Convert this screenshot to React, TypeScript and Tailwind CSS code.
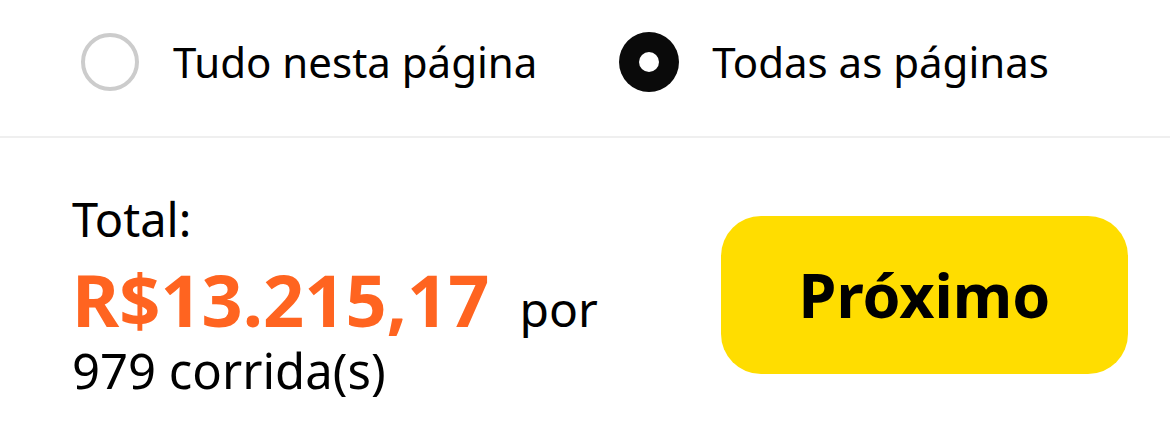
export default function App() {
  return (
    <div className="w-[1170px] h-[439px] bg-white font-['Noto_Sans',sans-serif] text-black">
      <div className="flex items-center h-[138px] pb-[12px] pl-[81px] border-b-2 border-[#efefef]">
        <div className="flex items-center gap-[34px]">
          <div className="w-[58px] h-[58px] rounded-full border-[4px] border-[#cccccc]" />
          <span className="text-[42px] leading-none">Tudo nesta página</span>
        </div>
        <div className="flex items-center gap-[33px] ml-[82px]">
          <div className="w-[60px] h-[60px] rounded-full bg-[#0a0a0a] flex items-center justify-center">
            <div className="w-[20px] h-[20px] rounded-full bg-white" />
          </div>
          <span className="text-[42px] leading-none">Todas as páginas</span>
        </div>
      </div>
      <div className="flex items-center justify-between pl-[72px] pr-[42px] pt-[57px]">
        <div className="flex flex-col">
          <span className="text-[47px] leading-[48px]">Total:</span>
          <div className="flex items-baseline mt-[26px]">
            <span className="text-[72px] leading-[60px] font-bold text-[#ff6420]">R$13.215,17</span>
            <span className="text-[48px] leading-[48px] ml-[30px]">por</span>
          </div>
          <span className="text-[49px] leading-[48px] mt-[13px]">979 corrida(s)</span>
        </div>
        <button className="w-[407px] h-[158px] rounded-[40px] bg-[#ffdd00] text-[61px] font-bold">Próximo</button>
      </div>
    </div>
  );
}
